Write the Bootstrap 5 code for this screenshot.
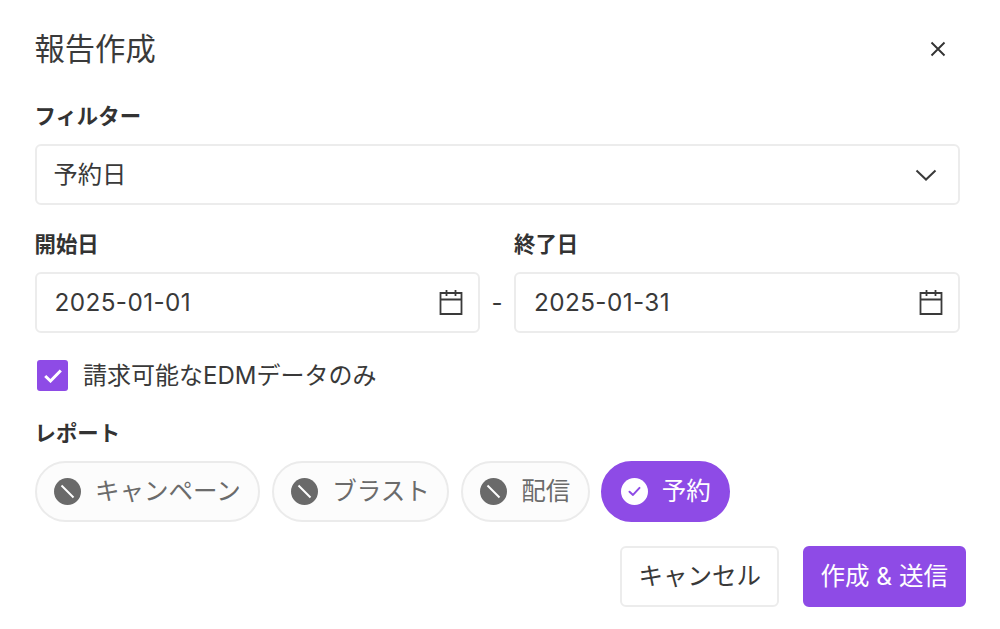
<!DOCTYPE html>
<html lang="ja">
<head>
<meta charset="utf-8">
<title>報告作成</title>
<link href="https://cdn.jsdelivr.net/npm/bootstrap@5.3.0/dist/css/bootstrap.min.css" rel="stylesheet">
<style>
html,body{height:629px;overflow:hidden;background:#fff}
body{font-family:"Inter","Noto Sans CJK JP",sans-serif;color:#393939}
.dlg{width:1000px;height:629px;padding:0 40.5px 0 34.5px}
.dlg-head{height:99px;padding-bottom:2px}
.dlg-title{font-size:30.3px;line-height:40px;font-weight:400;margin:0;color:#3a3a3a}
.x-btn{width:48px;height:48px;margin-right:-2px;padding:0;border:0;background:none}
.lbl{font-size:21.4px;line-height:30px;font-weight:700;color:#333;margin:0;display:block}
.lbl-top{height:45px;padding-top:2px}
.lbl-sm{height:67px;padding-top:25px;line-height:28px}
.field{height:61px;border:2px solid #ececec;border-radius:6px;padding:0 15px 0 17px;font-size:24.3px;line-height:1;color:#393939;background:#fff}
.dt{letter-spacing:.4px;margin-left:1px}
.cal{margin-bottom:2px}
.chev{margin-right:6px}
.sep{width:34px;font-size:24px;padding-top:67px}
.sep-in{height:61px}
.col-date{flex:1 1 0}
.chk-row{margin-top:27px;height:31px;padding-left:2.5px;gap:15px;font-size:24px;line-height:31px}
.chk-box{width:31px;height:31px;border-radius:3px;background:#8e4be6}
.rep-lbl{margin-top:27px;height:43px}
.chips{gap:11.5px;height:61px}
.chip{height:61px;border-radius:31px;border:2px solid #ebebeb;background:#fcfcfc;color:#6b6b6b;font-size:24.5px;padding:0 17.5px;gap:14px}
.chip.on{background:#8e4be6;border-color:#8e4be6;color:#fff}
.foot{margin-top:24px;margin-right:-6px;gap:24px}
.act{height:61px;font-size:24.5px;border-radius:6px;padding:0 16px;line-height:1}
.act-line{border:2px solid #ececec;background:#fff;color:#393939}
.act-fill{border:2px solid #8e4be6;background:#8e4be6;color:#fff;padding:0 15.5px}
</style>
</head>
<body>
<div class="dlg">
  <div class="dlg-head d-flex align-items-center justify-content-between">
    <h1 class="dlg-title">報告作成</h1>
    <button class="x-btn d-flex align-items-center justify-content-center" type="button" aria-label="閉じる">
      <svg width="18" height="18" viewBox="0 0 18 18"><path d="M2.5 2.5l13 13M15.5 2.5l-13 13" stroke="#333" stroke-width="1.9" fill="none"/></svg>
    </button>
  </div>
  <label class="lbl lbl-top">フィルター</label>
  <div class="field d-flex align-items-center justify-content-between">
    <span>予約日</span>
    <svg class="chev" width="22" height="12" viewBox="0 0 22 12"><path d="M1.5 1.5l9.5 9 9.5-9" stroke="#3a3a3a" stroke-width="2" fill="none"/></svg>
  </div>
  <div class="d-flex">
    <div class="col-date">
      <label class="lbl lbl-sm">開始日</label>
      <div class="field d-flex align-items-center justify-content-between">
        <span class="dt">2025-01-01</span>
        <svg class="cal" width="24" height="26" viewBox="0 0 24 26"><path d="M1.5 4h21v21h-21zM1.5 10.5h21M7.5 1v6M16.5 1v6" stroke="#3a3a3a" stroke-width="1.8" fill="none"/></svg>
      </div>
    </div>
    <div class="sep"><div class="sep-in d-flex align-items-center justify-content-center">-</div></div>
    <div class="col-date">
      <label class="lbl lbl-sm">終了日</label>
      <div class="field d-flex align-items-center justify-content-between">
        <span class="dt">2025-01-31</span>
        <svg class="cal" width="24" height="26" viewBox="0 0 24 26"><path d="M1.5 4h21v21h-21zM1.5 10.5h21M7.5 1v6M16.5 1v6" stroke="#3a3a3a" stroke-width="1.8" fill="none"/></svg>
      </div>
    </div>
  </div>
  <div class="chk-row d-flex align-items-center">
    <span class="chk-box d-flex align-items-center justify-content-center">
      <svg width="18" height="14" viewBox="0 0 18 14"><path d="M1.2 7l5.3 5L16.8 1.5" stroke="#fff" stroke-width="3" fill="none"/></svg>
    </span>
    <span>請求可能なEDMデータのみ</span>
  </div>
  <label class="lbl rep-lbl">レポート</label>
  <div class="chips d-flex">
    <span class="chip d-inline-flex align-items-center">
      <svg width="27" height="27" viewBox="0 0 27 27"><circle cx="13.5" cy="13.5" r="13.5" fill="#6a6a6a"/><path d="M7.5 7.5l12 12" stroke="#fff" stroke-width="2"/></svg>キャンペーン
    </span>
    <span class="chip d-inline-flex align-items-center">
      <svg width="27" height="27" viewBox="0 0 27 27"><circle cx="13.5" cy="13.5" r="13.5" fill="#6a6a6a"/><path d="M7.5 7.5l12 12" stroke="#fff" stroke-width="2"/></svg>ブラスト
    </span>
    <span class="chip d-inline-flex align-items-center">
      <svg width="27" height="27" viewBox="0 0 27 27"><circle cx="13.5" cy="13.5" r="13.5" fill="#6a6a6a"/><path d="M7.5 7.5l12 12" stroke="#fff" stroke-width="2"/></svg>配信
    </span>
    <span class="chip on d-inline-flex align-items-center">
      <svg width="27" height="27" viewBox="0 0 27 27"><circle cx="13.5" cy="13.5" r="13.5" fill="#fff"/><path d="M8.5 13.7l3.5 3.2 6.5-7" stroke="#8e4be6" stroke-width="2" stroke-linecap="round" stroke-linejoin="round" fill="none"/></svg>予約
    </span>
  </div>
  <div class="foot d-flex justify-content-end">
    <button type="button" class="btn act act-line">キャンセル</button>
    <button type="button" class="btn act act-fill">作成 &amp; 送信</button>
  </div>
</div>
<script src="https://cdn.jsdelivr.net/npm/bootstrap@5.3.0/dist/js/bootstrap.bundle.min.js"></script>
</body>
</html>
